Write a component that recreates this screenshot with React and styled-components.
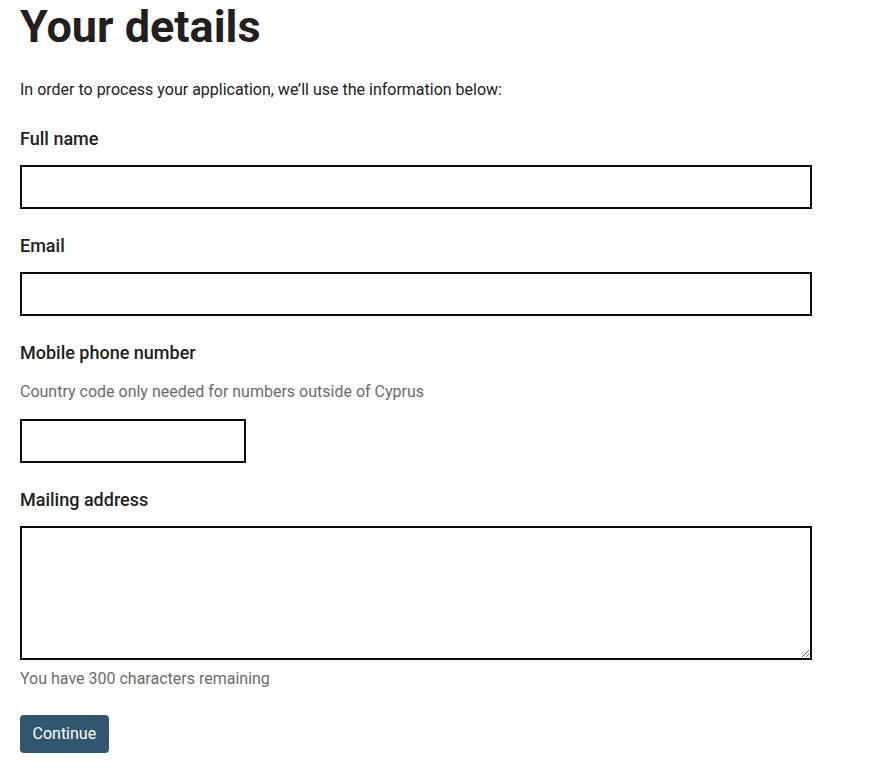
import React from "react";
import styled, { createGlobalStyle } from "styled-components";

const GlobalStyle = createGlobalStyle`
  body {
    margin: 0;
    font-family: Roboto, "Liberation Sans", Arial, sans-serif;
    color: #212121;
    background: #fff;
  }
`;

const fields = [
  { id: "name", label: "Full name", width: 792 },
  { id: "email", label: "Email", width: 792 },
  {
    id: "phone",
    label: "Mobile phone number",
    hint: "Country code only needed for numbers outside of Cyprus",
    width: 226,
  },
];

const App = () => {
  const [address, setAddress] = React.useState("");

  return (
    <Page>
      <GlobalStyle />
      <Title>Your details</Title>
      <Intro>In order to process your application, we’ll use the information below:</Intro>

      {fields.map((f) => (
        <Field key={f.id}>
          <Label htmlFor={f.id}>{f.label}</Label>
          {f.hint && <Hint>{f.hint}</Hint>}
          <Input id={f.id} type="text" width={f.width} />
        </Field>
      ))}

      <Field>
        <Label htmlFor="address">Mailing address</Label>
        <TextArea
          id="address"
          value={address}
          maxLength={300}
          onChange={(e) => setAddress(e.target.value)}
        />
        <Counter>You have {300 - address.length} characters remaining</Counter>
      </Field>

      <Button type="button">Continue</Button>
    </Page>
  );
};

const Page = styled.div`
  padding: 0 20px;
  display: flex;
  flex-direction: column;
  align-items: flex-start;
`;

const Title = styled.h1`
  margin: 0;
  font-size: 45px;
  line-height: 54px;
  font-weight: 700;
  color: #231f20;
`;

const Intro = styled.p`
  margin: 24px 0 0;
  font-size: 16px;
  line-height: 24px;
`;

const Field = styled.div`
  display: flex;
  flex-direction: column;
  align-items: flex-start;
  margin-top: 23px;
`;

const Label = styled.label`
  font-size: 18px;
  line-height: 27px;
  font-weight: 500;
  margin-bottom: 13px;
`;

const Hint = styled.div`
  margin: 1px 0 15px;
  font-size: 16px;
  line-height: 24px;
  color: #6b6b6b;
`;

const Input = styled.input`
  box-sizing: border-box;
  width: ${(props) => props.width}px;
  height: 44px;
  border: 2px solid #0b0c0c;
  border-radius: 0;
  padding: 5px 8px;
  font: inherit;
  font-size: 16px;
  outline: none;
`;

const TextArea = styled.textarea`
  box-sizing: border-box;
  width: 792px;
  height: 134px;
  border: 2px solid #0b0c0c;
  border-radius: 0;
  padding: 5px 8px;
  font: inherit;
  font-size: 16px;
  outline: none;
  display: block;
`;

const Counter = styled.div`
  margin-top: 7px;
  font-size: 16px;
  line-height: 24px;
  color: #6b6b6b;
`;

const Button = styled.button`
  margin-top: 24px;
  height: 38px;
  padding: 0 12.5px 2px;
  background-color: #31566f;
  color: #fff;
  border: none;
  border-radius: 4px;
  font-family: inherit;
  font-size: 16px;
  cursor: pointer;
`;

export default App;
